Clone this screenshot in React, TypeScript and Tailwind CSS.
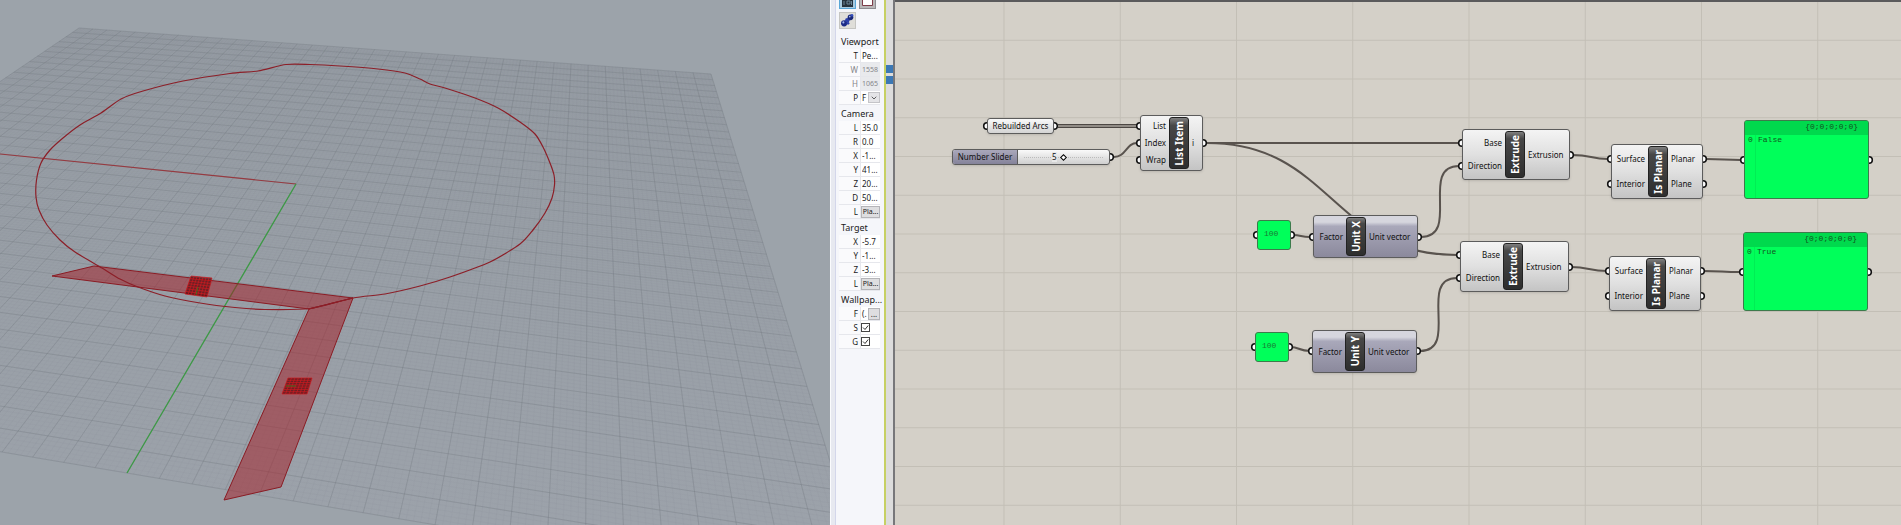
import type { ReactNode } from "react"
import { ChevronDown } from "lucide-react"

type Point = [number, number]

/* ---------- perspective viewport ---------- */

// ground plane (-1..1 on both axes) to viewport coordinates
function project(a: number, b: number): Point {
    const w = 1 - 0.08794 * a - 0.36488 * b
    return [(396.56 * a - 215.34 * b + 296) / w, (26.9 * a + 116.41 * b + 184) / w]
}

function segment(a1: number, b1: number, a2: number, b2: number) {
    const [x1, y1] = project(a1, b1)
    const [x2, y2] = project(a2, b2)
    return `M${x1.toFixed(1)} ${y1.toFixed(1)}L${x2.toFixed(1)} ${y2.toFixed(1)}`
}

function gridPath(cells: number) {
    let d = ""
    for (let i = -cells; i <= cells; i++) {
        const t = i / cells
        d += segment(t, -1, t, 1) + segment(-1, t, 1, t)
    }
    return d
}

function smooth(points: Point[]) {
    const n = points.length
    const at = (i: number) => points[(i + n) % n]
    let d = `M${points[0].join(" ")}`
    for (let i = 0; i < n; i++) {
        const [p0, p1, p2, p3] = [at(i - 1), at(i), at(i + 1), at(i + 2)]
        d += `C${p1[0] + (p2[0] - p0[0]) / 8} ${p1[1] + (p2[1] - p0[1]) / 8} ${p2[0] - (p3[0] - p1[0]) / 8} ${p2[1] - (p3[1] - p1[1]) / 8} ${p2[0]} ${p2[1]}`
    }
    return d
}

// small hatch drawn in the middle of a preview plane
function hatchPath([p, q, r, s]: Point[]) {
    const mix = (m: Point, n: Point, t: number) => `${m[0] + (n[0] - m[0]) * t} ${m[1] + (n[1] - m[1]) * t}`
    let d = ""
    for (let i = 0; i <= 7; i++) {
        const t = i / 7
        d += `M${mix(p, q, t)}L${mix(s, r, t)}M${mix(p, s, t)}L${mix(q, r, t)}`
    }
    return d
}

const majorGrid = gridPath(20)
const minorGrid = gridPath(100)
const ground = [project(-1, -1), project(1, -1), project(1, 1), project(-1, 1)].join(" ")

const arcs: Point[] = [
    [286, 64.5], [258, 71], [230, 73.5], [183, 81], [143, 91], [121, 99], [101, 113], [80, 125], [63, 138],
    [50, 150], [41, 163], [36.5, 180], [36, 197], [39, 210], [47, 225], [60, 240], [75, 252], [102, 268],
    [120, 279], [138, 287], [165, 296], [200, 303], [235, 307.5], [265, 309.5], [310, 308.5], [353, 298],
    [385, 294], [420, 286], [450, 277], [490, 262], [520, 244], [533, 230], [545, 213], [552, 198],
    [554.5, 185], [554, 175], [550, 163], [543, 147], [535, 134], [520, 122], [498, 108], [475, 98],
    [445, 88], [430, 84], [420, 79], [405, 73], [378, 69], [340, 66], [310, 64.5],
]

const hatches: Point[][] = [
    [[191, 276], [212, 278], [207, 297], [185, 294]],
    [[288, 378], [312, 378], [307, 394], [282, 394]],
]

function Viewport() {
    return (
        <section aria-label="Perspective viewport" className="relative min-w-0 flex-[830] overflow-hidden bg-[#9ca3aa]">
            <svg viewBox="0 0 830 525" preserveAspectRatio="xMinYMin slice" className="absolute inset-0 h-full w-full" fill="none">
                <defs>
                    <linearGradient id="ground" x1="0" y1="0" x2="0" y2="525" gradientUnits="userSpaceOnUse">
                        <stop offset="0" stopColor="#959ca3" />
                        <stop offset="1" stopColor="#9ca2aa" />
                    </linearGradient>
                </defs>
                <polygon points={ground} fill="url(#ground)" />
                <path d={minorGrid} stroke="#7f868d" strokeOpacity="0.12" strokeWidth="0.6" />
                <path d={majorGrid} stroke="#70767d" strokeOpacity="0.38" strokeWidth="0.8" />
                <path d="M0 154L296 184" stroke="#963a40" strokeWidth="1.2" />
                <path d="M296 184L127 473" stroke="#3c9a44" strokeWidth="1.3" />
                <g fill="#a31a22" fillOpacity="0.5" stroke="#8a1c24" strokeWidth="1">
                    <polygon points="52,276 94,266 353,298 309,309" />
                    <polygon points="309,309 353,298 281,487 224,500" />
                </g>
                <path d={smooth(arcs)} stroke="#8c1f28" strokeWidth="1.2" />
                {hatches.map((corners, i) => (
                    <g key={i}>
                        <polygon points={corners.join(" ")} fill="#5c0c10" fillOpacity="0.75" />
                        <path d={hatchPath(corners)} stroke="#cf1a20" strokeWidth="0.7" />
                    </g>
                ))}
                <path d="M198 287L196 295M286 386H296" stroke="#4f6b1e" strokeWidth="1" />
            </svg>
        </section>
    )
}

/* ---------- properties panel ---------- */

type Property = {
    label: string
    name: string
    value?: string
    kind?: "text" | "readonly" | "select" | "button" | "file" | "check"
}

const groups: { title: string; rows: Property[] }[] = [
    {
        title: "Viewport",
        rows: [
            { label: "T", name: "viewport-title", value: "Pe..." },
            { label: "W", name: "viewport-width", value: "1558", kind: "readonly" },
            { label: "H", name: "viewport-height", value: "1065", kind: "readonly" },
            { label: "P", name: "viewport-projection", value: "F", kind: "select" },
        ],
    },
    {
        title: "Camera",
        rows: [
            { label: "L", name: "camera-lens", value: "35.0" },
            { label: "R", name: "camera-rotation", value: "0.0" },
            { label: "X", name: "camera-x", value: "-1..." },
            { label: "Y", name: "camera-y", value: "41..." },
            { label: "Z", name: "camera-z", value: "20..." },
            { label: "D", name: "camera-distance", value: "50..." },
            { label: "L", name: "camera-location", value: "Pla...", kind: "button" },
        ],
    },
    {
        title: "Target",
        rows: [
            { label: "X", name: "target-x", value: "-5.7" },
            { label: "Y", name: "target-y", value: "-1..." },
            { label: "Z", name: "target-z", value: "-3..." },
            { label: "L", name: "target-location", value: "Pla...", kind: "button" },
        ],
    },
    {
        title: "Wallpap...",
        rows: [
            { label: "F", name: "wallpaper-file", value: "(.", kind: "file" },
            { label: "S", name: "wallpaper-show", kind: "check" },
            { label: "G", name: "wallpaper-gray", kind: "check" },
        ],
    },
]

function PropertyControl({ row }: { row: Property }) {
    switch (row.kind) {
        case "select":
            return (
                <div className="relative h-full w-full">
                    <select id={row.name} className="h-full w-full appearance-none bg-white pl-px">
                        <option>{row.value}</option>
                    </select>
                    <span className="pointer-events-none absolute inset-y-px right-0 flex w-3 items-center justify-center border border-[#c4c4c8] bg-[#e4e4e7]">
                        <ChevronDown size={8} className="shrink-0" />
                    </span>
                </div>
            )
        case "button":
            return (
                <button id={row.name} className="h-3 w-full border border-[#b4b4b8] bg-[#dedee0] text-[7px] leading-none">
                    {row.value}
                </button>
            )
        case "file":
            return (
                <>
                    <span className="pl-px">{row.value}</span>
                    <button id={row.name} className="ml-auto h-3 w-3 border border-[#b4b4b8] bg-[#dedee0] leading-none">
                        ...
                    </button>
                </>
            )
        case "check":
            return (
                <span className="relative flex">
                    <input
                        id={row.name}
                        type="checkbox"
                        defaultChecked
                        className="peer size-[9px] appearance-none border border-[#444] bg-white"
                    />
                    <svg viewBox="0 0 9 9" className="pointer-events-none absolute left-0 size-[9px] opacity-0 peer-checked:opacity-100" fill="none" stroke="#333">
                        <path d="M2 4.5L4 6.5L7.2 2.5" />
                    </svg>
                </span>
            )
        default:
            return (
                <input
                    id={row.name}
                    defaultValue={row.value}
                    readOnly={row.kind === "readonly"}
                    className="h-full w-full min-w-0 bg-white pl-px read-only:bg-[#e9eaed] read-only:text-[7px] read-only:text-[#85868a]"
                />
            )
    }
}

function Spheres() {
    return (
        <svg viewBox="0 0 16 16" className="size-full">
            <circle cx="4.4" cy="11" r="3.3" fill="#1c2b86" />
            <circle cx="7.8" cy="7.6" r="2.4" fill="#2b3fa8" />
            <circle cx="11.200" cy="4.6" r="3" fill="#1a2878" />
            <circle cx="12.800" cy="2.4" r="1.4" fill="#3650bd" />
            <circle cx="10.4" cy="3.8" r="0.9" fill="#a5b8f0" />
            <circle cx="3.6" cy="10" r="1.1" fill="#a5b8f0" />
            <circle cx="8.6" cy="11" r="1.4" fill="#2b3fa8" />
        </svg>
    )
}

function PropertiesPanel() {
    return (
        <aside className="flex w-[65px] shrink-0 border-l border-[#fafbfd] bg-[#e7e9f0]">
            <div className="ml-1 flex-1 overflow-hidden border-l border-[#d3d6ea] bg-[#f5f6fa] pl-[3px] text-[8px] leading-none text-[#1a1a1a]">
                <div className="flex h-[33px] flex-wrap content-start gap-x-[3px] gap-y-[3px]">
                    <button aria-label="Viewport properties" className="h-[9px] w-[17px] border border-t-0 border-[#5aa6d6] bg-[#a9cbe0] px-0.5 pb-px">
                        <svg viewBox="0 0 11 7" preserveAspectRatio="none" className="size-full">
                            <path d="M0 0H11V7H0Z" fill="#26333d" />
                            <path d="M2 1V5M5 1H8V4H5ZM9.500 1V5" stroke="#6d8798" fill="none" />
                        </svg>
                    </button>
                    <button aria-label="Object properties" className="h-[9px] w-[17px] border border-t-0 border-[#8d8d91] bg-[#b9b7b8] px-0.5 pb-px">
                        <svg viewBox="0 0 11 7" preserveAspectRatio="none" className="size-full">
                            <path d="M0.500 -1V5.500H10.500V-1" fill="#fff" stroke="#7c3b48" />
                        </svg>
                    </button>
                    <button aria-label="Material" className="size-[17px] border border-[#c5c5c2] bg-[#dfded9]">
                        <Spheres />
                    </button>
                </div>
                {groups.map((group) => (
                    <section key={group.title} className="mr-[4px]">
                        <h2 className="flex h-4 items-center pl-0.5 text-[9px]">{group.title}</h2>
                        {group.rows.map((row) => (
                            <div key={row.name} className="flex h-[14px] items-stretch border-b border-[#e6e7ec] bg-[#fafafc]">
                                <label
                                    htmlFor={row.name}
                                    className={`flex w-5 shrink-0 items-center justify-end pr-px ${row.kind === "readonly" ? "text-[#85868a]" : ""}`}
                                >
                                    {row.label}
                                </label>
                                <div className="ml-px flex min-w-0 flex-1 items-center border-l border-[#e6e7ec] bg-white">
                                    <PropertyControl row={row} />
                                </div>
                            </div>
                        ))}
                    </section>
                ))}
            </div>
            <div className="w-0.5 bg-[#c6d063]" />
            <div className="flex w-[7px] flex-col gap-[3px] bg-[#dcdcdc] pt-[65px]">
                <span className="h-2 bg-[#3b78b5]" />
                <span className="h-2 bg-[#3b78b5]" />
            </div>
            <div className="w-0.5 bg-[#77777a]" />
        </aside>
    )
}

/* ---------- node canvas ---------- */

const wires = [
    "M312 143H564",
    "M312 143C437 143 437 255 562 255",
    "M219 157C231 157 231 143 242 143",
    "M398 235C406 235 406 237 415 237",
    "M396 347C404 347 404 351 415 351",
    "M526 237C566 237 524 166 564 166",
    "M525 351C565 351 522 278 562 278",
    "M678 155C696 155 696 159 713 159",
    "M676 267C694 267 694 271 712 271",
    "M811 159C829 159 829 160 846 160",
    "M809 271C827 271 827 272 845 272",
]

const ports: Point[] = [
    [92, 126], [159, 126], [215, 157],
    [245, 126], [245, 143], [245, 160], [308, 143],
    [362, 235], [396, 235], [418, 237], [523, 237],
    [360, 347], [394, 347], [417, 351], [522, 351],
    [567, 143], [567, 166], [675, 155],
    [565, 255], [565, 278], [674, 267],
    [716, 159], [716, 184], [808, 159], [808, 184],
    [714, 271], [714, 296], [806, 271], [806, 296],
    [849, 160], [974, 160], [848, 272], [973, 272],
]

function Wires() {
    return (
        <svg className="absolute inset-0 h-full w-full" fill="none">
            <defs>
                <pattern id="canvas-grid" width="116.25" height="38.75" x="108.5" y="1" patternUnits="userSpaceOnUse">
                    <path d="M0.500 0V38.750M0 0.500H116.250" stroke="#c3bfb6" />
                </pattern>
            </defs>
            <rect width="100%" height="100%" fill="url(#canvas-grid)" />
            <path d="M163 126H242" stroke="#4c4743" strokeWidth="4" />
            <path d="M163 126H242" stroke="#a8a39c" strokeWidth="1.5" />
            <g stroke="#59534e" strokeWidth="2">
                {wires.map((d) => (
                    <path key={d} d={d} />
                ))}
            </g>
            <g fill="#fff" stroke="#111" strokeWidth="1.6">
                {ports.map(([x, y]) => (
                    <circle key={`${x}-${y}`} cx={x} cy={y} r="3.3" />
                ))}
            </g>
        </svg>
    )
}

type NodeProps = {
    title: string
    inputs: string[]
    outputs: string[]
    place: string
    inputWidth: string
    tone?: "light" | "violet"
}

function Node({ title, inputs, outputs, place, inputWidth, tone = "light" }: NodeProps) {
    const fill =
        tone === "light"
            ? "bg-linear-to-b from-[#f4f4f4] via-[#e0e0e0] to-[#c4c4c4]"
            : "bg-linear-to-b from-[#d6d6de] from-15% via-[#a9a8ba] via-25% to-[#8b899c]"
    return (
        <article className={`absolute flex rounded-[3px] border border-[#5c5c5c] py-px shadow-sm ${fill} ${place}`}>
            <ul className={`flex flex-col justify-around pr-[3px] text-right ${inputWidth}`}>
                {inputs.map((name) => (
                    <li key={name}>{name}</li>
                ))}
            </ul>
            <h3 className="flex w-5 shrink-0 items-center justify-center overflow-hidden rounded-[3px] border border-[#222] bg-linear-to-b from-[#808080] via-[#484848] via-15% to-[#2e2e2e] text-[10px] font-bold whitespace-nowrap text-white">
                <span className="rotate-180 [writing-mode:vertical-rl]">{title}</span>
            </h3>
            <ul className="flex flex-1 flex-col justify-around pl-[3px] whitespace-nowrap">
                {outputs.map((name) => (
                    <li key={name}>{name}</li>
                ))}
            </ul>
        </article>
    )
}

function ValuePanel({ place, children }: { place: string; children: ReactNode }) {
    return (
        <div className={`absolute h-[30px] w-[34px] rounded-[3px] border border-[#3d7a4c] bg-[#00ff5a] px-1.5 pt-2 font-['Liberation_Mono',monospace] text-[#1b7a35] ${place}`}>
            {children}
        </div>
    )
}

function DataPanel({ place, value }: { place: string; value: string }) {
    return (
        <article className={`absolute flex h-[79px] w-[125px] flex-col overflow-hidden rounded-[3px] border border-[#3d7a4c] bg-[#00ff5a] font-['Liberation_Mono',monospace] text-[#14541f] ${place}`}>
            <header className="h-[14px] bg-[#00d94d] pt-px pr-2.5 text-right">{"{0;0;0;0;0}"}</header>
            <div className="flex flex-1">
                <span className="w-[11px] border-r border-[#00ee54] pl-[3px]">0</span>
                <span className="pl-0.5">{value}</span>
            </div>
        </article>
    )
}

function Canvas() {
    return (
        <main className="relative min-w-0 flex-[1006] overflow-hidden border-t-2 border-[#5a5a5c] bg-[#d4d0c8] text-[8px] leading-[10px] text-[#111]">
            <div className="absolute inset-x-0 -top-0.5 bottom-0">
                <Wires />
                <div className="absolute top-[118px] left-[92px] flex h-4 w-[67px] items-center justify-center rounded-[3px] border border-[#5c5c5c] bg-linear-to-b from-[#fafafa] to-[#d4d4d4] whitespace-nowrap shadow-sm">
                    Rebuilded Arcs
                </div>
                <div className="absolute top-[149px] left-[57px] flex h-4 w-[158px] items-stretch overflow-hidden rounded-[3px] border border-[#5c5c5c] bg-linear-to-b from-[#fafafa] to-[#cfcfcf] shadow-sm">
                    <label htmlFor="number-slider" className="flex w-[65px] items-center justify-center border-r border-[#5c5c5c] bg-linear-to-b from-[#aaa8bb] to-[#85839a]">
                        Number Slider
                    </label>
                    <div className="relative flex flex-1 items-center px-1.5">
                        <span className="absolute inset-x-1.5 border-t border-dotted border-[#bbb]" />
                        <input
                            id="number-slider"
                            type="range"
                            min={0}
                            max={10}
                            defaultValue={5}
                            className="relative h-3 w-full appearance-none bg-transparent [&::-webkit-slider-thumb]:size-[5px] [&::-webkit-slider-thumb]:rotate-45 [&::-webkit-slider-thumb]:appearance-none [&::-webkit-slider-thumb]:border [&::-webkit-slider-thumb]:border-black [&::-webkit-slider-thumb]:bg-white"
                        />
                        <output htmlFor="number-slider" className="absolute left-[34px] bg-[#e8e8e8]">5</output>
                    </div>
                </div>
                <Node title="List Item" inputs={["List", "Index", "Wrap"]} outputs={["i"]} place="top-[115px] left-[245px] h-14 w-[63px]" inputWidth="w-[28px]" />
                <Node title="Unit X" tone="violet" inputs={["Factor"]} outputs={["Unit vector"]} place="top-[215px] left-[418px] h-[43px] w-[105px]" inputWidth="w-[32px]" />
                <Node title="Unit Y" tone="violet" inputs={["Factor"]} outputs={["Unit vector"]} place="top-[330px] left-[417px] h-[43px] w-[105px]" inputWidth="w-[32px]" />
                <Node title="Extrude" inputs={["Base", "Direction"]} outputs={["Extrusion"]} place="top-[129px] left-[567px] h-[51px] w-[108px]" inputWidth="w-[42px]" />
                <Node title="Extrude" inputs={["Base", "Direction"]} outputs={["Extrusion"]} place="top-[241px] left-[565px] h-[51px] w-[109px]" inputWidth="w-[42px]" />
                <Node title="Is Planar" inputs={["Surface", "Interior"]} outputs={["Planar", "Plane"]} place="top-[144px] left-[716px] h-[55px] w-[92px]" inputWidth="w-[36px]" />
                <Node title="Is Planar" inputs={["Surface", "Interior"]} outputs={["Planar", "Plane"]} place="top-[256px] left-[714px] h-[55px] w-[92px]" inputWidth="w-[36px]" />
                <ValuePanel place="top-[220px] left-[362px]">100</ValuePanel>
                <ValuePanel place="top-[332px] left-[360px]">100</ValuePanel>
                <DataPanel place="top-[120px] left-[849px]" value="False" />
                <DataPanel place="top-[232px] left-[848px]" value="True" />
            </div>
        </main>
    )
}

export default function App() {
    return (
        <div className="flex min-h-screen font-['Noto_Sans','Open_Sans',sans-serif]">
            <Viewport />
            <PropertiesPanel />
            <Canvas />
        </div>
    )
}
